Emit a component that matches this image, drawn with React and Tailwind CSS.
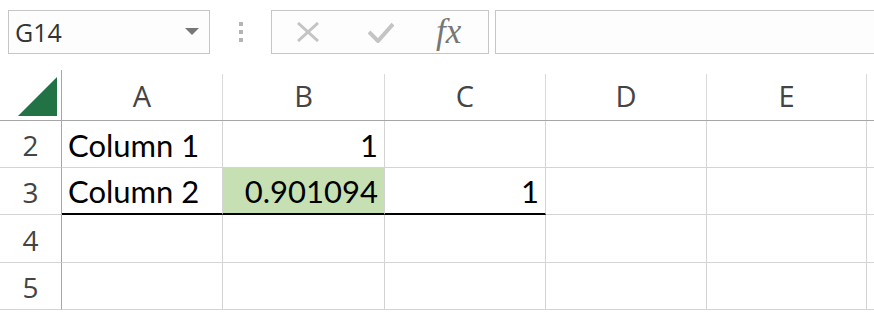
// Spreadsheet view: name box, formula bar and a small grid

import React from 'react';

const COLS = ['A', 'B', 'C', 'D', 'E', ''];
const WIDTHS = ['w-[161px]', 'w-[162px]', 'w-[161px]', 'w-[161px]', 'w-[160px]', 'w-[161px]'];

const rows = [
  { n: 2, h: 'h-[47px]', cells: [{ v: 'Column 1' }, { v: '1', num: true }, {}, {}, {}, {}] },
  {
    n: 3,
    h: 'h-[47px]',
    underline: true,
    cells: [{ v: 'Column 2' }, { v: '0.901094', num: true, fill: true }, { v: '1', num: true }, {}, {}, {}],
  },
  { n: 4, h: 'h-[48px]', cells: [{}, {}, {}, {}, {}, {}] },
  { n: 5, h: 'h-[47px]', cells: [{}, {}, {}, {}, {}, {}] },
];

const Toolbar = () => (
  <div className="flex items-start h-[70px] pt-[10px] pl-[8px] bg-white">
    {/* Name box */}
    <div className="w-[202px] h-[44px] border border-[#c6c6c6] bg-[#fdfdfd] flex items-center justify-between pl-[6px] pr-[10px]">
      <span className="text-[25px] text-[#333] font-['Open_Sans',sans-serif] leading-none">G14</span>
      <svg width="14" height="8" viewBox="0 0 14 8">
        <polygon points="0,0 14,0 7,7" fill="#777" />
      </svg>
    </div>
    {/* Grip dots */}
    <div className="w-[61px] h-[44px] flex flex-col items-center justify-center gap-[4px]">
      <div className="w-[4px] h-[4px] bg-[#b4b4b4]" />
      <div className="w-[4px] h-[4px] bg-[#b4b4b4]" />
      <div className="w-[4px] h-[4px] bg-[#b4b4b4]" />
    </div>
    {/* Cancel / enter / fx */}
    <div className="w-[218px] h-[44px] border border-[#c6c6c6] bg-[#fdfdfd] flex items-center">
      <svg className="ml-[25px]" width="22" height="20" viewBox="0 0 22 20">
        <line x1="1" y1="1" x2="21" y2="19" stroke="#c4c4c4" strokeWidth="3" />
        <line x1="21" y1="1" x2="1" y2="19" stroke="#c4c4c4" strokeWidth="3" />
      </svg>
      <svg className="ml-[49px]" width="26" height="21" viewBox="0 0 26 21">
        <polyline points="1,10 10,19 25,2" fill="none" stroke="#c4c4c4" strokeWidth="4" />
      </svg>
      <span className="ml-[42px] text-[35px] italic text-[#777] font-['Liberation_Serif',serif] leading-none -mt-[2px]">fx</span>
    </div>
    {/* Formula input */}
    <div className="ml-[6px] flex-1 h-[44px] border border-r-0 border-[#c6c6c6] bg-[#fdfdfd]" />
  </div>
);

const HeaderRow = () => (
  <div className="flex h-[51px] border-b border-[#a6a6a6]">
    <div className="w-[62px] shrink-0 border-r border-[#a6a6a6] flex items-end justify-end pr-[3px] pb-[3px]">
      <svg width="40" height="40" viewBox="0 0 40 40">
        <polygon points="39,0 39,39 0,39" fill="#217346" />
      </svg>
    </div>
    {COLS.map((c, i) => (
      <div
        key={i}
        className={`${WIDTHS[i]} shrink-0 border-r border-[#dadada] mt-[4px] flex items-center justify-center pb-[2px] text-[29px] text-[#444] font-['Open_Sans',sans-serif]`}
      >
        {c}
      </div>
    ))}
  </div>
);

const Row = ({ row }) => (
  <div className={`flex ${row.h}`}>
    <div className="w-[62px] shrink-0 border-r border-[#a6a6a6] border-b border-b-[#d4d4d4] flex items-center justify-center pt-[2px] text-[28px] text-[#444] font-['Open_Sans',sans-serif]">
      {row.n}
    </div>
    {row.cells.map((cell, i) => {
      const black = row.underline && i < 3;
      return (
        <div
          key={i}
          className={`${WIDTHS[i]} shrink-0 border-r border-[#d4d4d4] flex items-end px-[6px] pb-[3px] text-[31px] leading-[38px] text-black font-['Lato',sans-serif] ${
            cell.num ? 'justify-end' : 'justify-start'
          } ${cell.fill ? 'bg-[#c6e0b4]' : ''} ${black ? 'border-b-2 border-b-black' : 'border-b border-b-[#d4d4d4]'}`}
        >
          {cell.v}
        </div>
      );
    })}
  </div>
);

export default function App() {
  return (
    <div className="w-[874px] h-[314px] overflow-hidden bg-white">
      <Toolbar />
      <div className="w-[1000px]">
        <HeaderRow />
        {rows.map((r) => (
          <Row key={r.n} row={r} />
        ))}
      </div>
    </div>
  );
}
